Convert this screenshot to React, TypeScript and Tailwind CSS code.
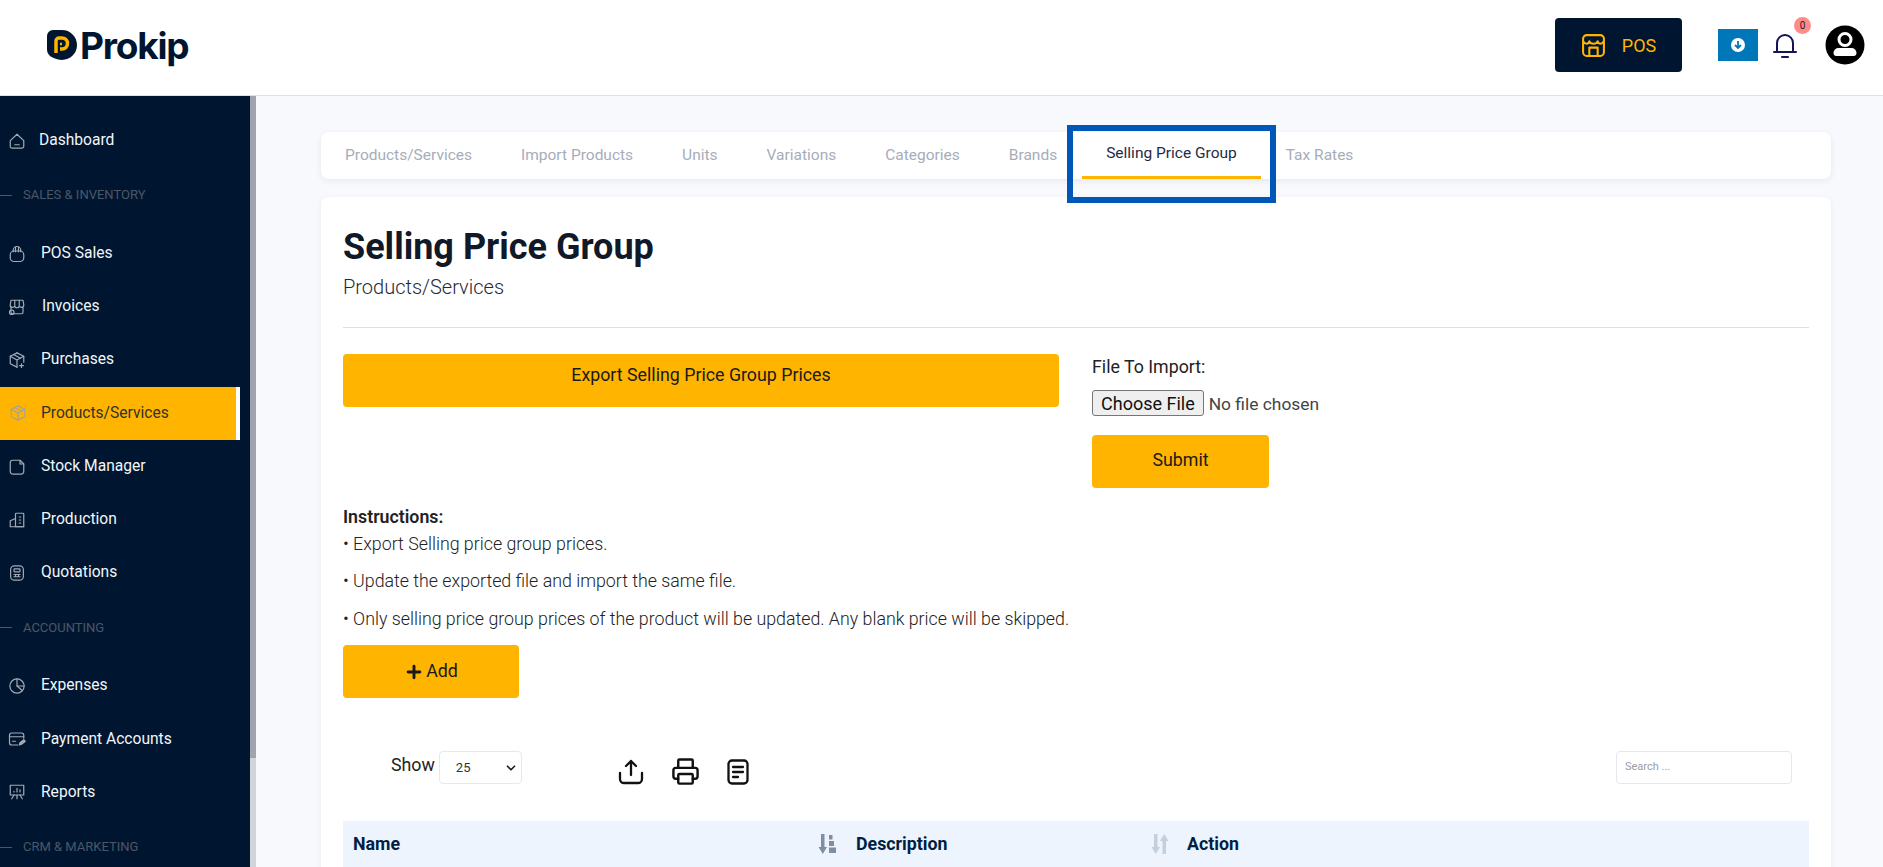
import { ChevronDown, Plus, Printer } from 'lucide-react';
import type { ReactNode } from 'react';

const S = ({ children }: { children: ReactNode }) => (
  <svg viewBox="0 0 24 24" fill="none" stroke="currentColor" strokeWidth="1.6" strokeLinecap="round" strokeLinejoin="round" className="w-[18px] h-[18px] shrink-0">
    {children}
  </svg>
);

const icons: Record<string, ReactNode> = {
  home: <S><path d="M3 11.5 12 3l9 8.5V19a2.5 2.5 0 0 1-2.5 2.5h-13A2.5 2.5 0 0 1 3 19z" /><path d="M9 17h6" /></S>,
  bag: <S><path d="M7 9V7a5 5 0 0 1 10 0v2" /><rect x="3" y="8" width="18" height="14" rx="5" /><path d="M10 3v6M14 3v6" /></S>,
  store: <S><path d="M4 3h16l1 6a3 3 0 0 1-6 1 3 3 0 0 1-6 0 3 3 0 0 1-6-1z" /><path d="M4 12v7a2 2 0 0 0 2 2h12a2 2 0 0 0 2-2v-7" /><path d="M9 3v6M15 3v6" /><circle cx="5" cy="19" r="3" /></S>,
  box: <S><path d="M12 2.5 21 7v8" /><path d="M12 2.5 3 7v10l9 4.5" /><path d="M3 7l9 5 9-5M12 12v9.5M7.5 4.7l9 5" /><path d="M18 17v5M15.5 19.5h5" /></S>,
  pack: <S><path d="M12 2.5 21 7v10l-9 4.5L3 17V7z" /><path d="M3 7l9 5 9-5M12 12v9.5M7.5 4.7l9 5" /></S>,
  file: <S><path d="M6 3h10l5 5v10a3.5 3.5 0 0 1-3.5 3.5h-11A3.5 3.5 0 0 1 3 18V6a3 3 0 0 1 3-3z" /><path d="M16 3v5h5" /></S>,
  build: <S><path d="M10 21V4a1 1 0 0 1 1-1h9a1 1 0 0 1 1 1v17z" /><path d="M3 21v-8l7-3M3 21h18" /><path d="M15 8h2M15 12h2M15 16h2" /></S>,
  calc: <S><rect x="3.5" y="2.5" width="17" height="19" rx="5" /><rect x="8" y="6.5" width="8" height="4" rx="1" /><path d="M8 14h8M8 17h8M10 14v3M14 14v3" /></S>,
  pie: <S><circle cx="12" cy="12" r="9.5" /><path d="M12 2.5V12l7 6" /><path d="M12 12h9.5" /></S>,
  card: <S><path d="M21 11V7a3 3 0 0 0-3-3H5a3 3 0 0 0-3 3v10a3 3 0 0 0 3 3h8" /><path d="M2 9h19" /><path d="M6 15h4" /><path d="m15 20 1-3 5-4 2 2-5 4z" fill="currentColor" /></S>,
  chart: <S><path d="M3 3h18v13H3z" /><path d="M8 12v-1M12 12V7M16 12V9" /><path d="M12 16v5M8 16l-3 5M16 16l3 5" /></S>,
};

type Entry = { label?: string; section?: string; icon?: string; gap?: string; active?: boolean };

const menu: Entry[] = [
  { label: 'Dashboard', icon: 'home', gap: 'gap-[13px]' },
  { section: 'SALES & INVENTORY' },
  { label: 'POS Sales', icon: 'bag', gap: 'gap-[15px]' },
  { label: 'Invoices', icon: 'store', gap: 'gap-[16px]' },
  { label: 'Purchases', icon: 'box', gap: 'gap-[15px]' },
  { label: 'Products/Services', icon: 'pack', active: true },
  { label: 'Stock Manager', icon: 'file', gap: 'gap-[15px]' },
  { label: 'Production', icon: 'build', gap: 'gap-[15px]' },
  { label: 'Quotations', icon: 'calc', gap: 'gap-[15px]' },
  { section: 'ACCOUNTING' },
  { label: 'Expenses', icon: 'pie', gap: 'gap-[15px]' },
  { label: 'Payment Accounts', icon: 'card', gap: 'gap-[15px]' },
  { label: 'Reports', icon: 'chart', gap: 'gap-[15px]' },
  { section: 'CRM & MARKETING' },
];

const tabs = ['Products/Services', 'Import Products', 'Units', 'Variations', 'Categories', 'Brands', 'Selling Price Group', 'Tax Rates'];

function Logo() {
  return (
    <div className="flex items-center">
      <svg viewBox="0 0 30 31" className="w-[30px] h-[31px]">
        <path d="M0 6a6 6 0 0 1 6-6h9a15 15 0 0 1 15 15 15 15 0 0 1-15 15c-3 0-5-1-7-1.500C3 27 0 24 0 19z" fill="#001630" />
        <path d="M9 23V11a3 3 0 0 1 3-3h3a5.500 5.500 0 0 1 0 11h-2" fill="none" stroke="#ffb400" strokeWidth="3.500" />
        <path d="M13 14h2" stroke="#ffb400" strokeWidth="2.500" />
      </svg>
      <span className="ml-[3px] text-[37px] leading-none font-bold tracking-[-1.2px] text-[#001630] font-['Inter',sans-serif]">Prokip</span>
    </div>
  );
}

function Sidebar() {
  return (
    <aside className="w-[256px] shrink-0 flex overflow-hidden">
      <nav className="w-[250px] bg-[#001630] pt-[18px] flex flex-col">
        {menu.map((m) =>
          m.section ? (
            <div key={m.section} className="h-[60px] shrink-0 flex items-center pb-[4px] text-[13px] text-[#4b5669]">
              <span className="w-3 h-px bg-[#4b5669] mr-[11px]" />
              {m.section}
            </div>
          ) : (
            <div
              key={m.label}
              className={
                m.active
                  ? 'h-[53.2px] shrink-0 w-[240px] flex items-center pl-[9px] gap-[14px] bg-[#ffb400] border-r-4 border-white text-[#33322c] text-[15.6px]'
                  : `h-[53.2px] shrink-0 flex items-center pl-[8px] ${m.gap} text-[#f2f5f9] text-[15.6px]`
              }
            >
              <span className={m.active ? 'text-[#a8a493]' : 'text-[#a3aab5]'}>{icons[m.icon as string]}</span>
              {m.label}
            </div>
          ),
        )}
      </nav>
      <div className="w-[6px] bg-[#d1d5db]">
        <div className="h-[662px] bg-[#a0a4af]" />
      </div>
    </aside>
  );
}

function SortDown() {
  return (
    <svg viewBox="0 0 18 20" className="w-[18px] h-[20px] text-[#7f8ea3]" fill="currentColor">
      <path d="M3 0h3.500v13H9l-4.200 7L.5 13H3z" />
      <path d="M11 1h3.500v4.500H11zM11 7h5v5h-5zM11 13.500h7V19h-7z" />
    </svg>
  );
}

function SortBoth() {
  return (
    <svg viewBox="0 0 18 20" className="w-[18px] h-[20px] text-[#c5d0de]" fill="currentColor">
      <path d="M3 0h3.500v13H9l-4.200 7L.5 13H3z" />
      <path d="M11.500 20V7H9l4.200-7L17.500 7H15v13z" />
    </svg>
  );
}

export default function App() {
  return (
    <div className="h-screen overflow-hidden flex flex-col font-['Roboto',sans-serif] bg-[#f8f9fd]">
      <header className="h-[96px] shrink-0 bg-white border-b border-[#dfe1e8] flex items-center pb-[5px] pl-[47px] pr-[18px]">
        <Logo />
        <div className="ml-auto flex items-center">
          <div className="w-[127px] h-[54px] rounded-[4px] bg-[#001630] flex items-center justify-center gap-[16px] text-[#ffb400] text-[18px] mr-[36px]">
            <svg viewBox="0 0 24 24" fill="none" stroke="currentColor" strokeWidth="2" strokeLinejoin="round" className="w-[25px] h-[25px]">
              <rect x="2" y="2" width="20" height="20" rx="3.500" />
              <path d="M2 8c2 3 5 3 6 0 1 3 7 3 8 0 1 3 4 3 6 0" />
              <path d="M8 22v-8h8v8" />
            </svg>
            POS
          </div>
          <div className="w-[40px] h-[32px] bg-[#0077b8] flex items-center justify-center mr-[15px]">
            <svg viewBox="0 0 14 14" className="w-[14px] h-[14px]">
              <circle cx="7" cy="7" r="7" fill="#fff" />
              <path d="M7 3v7M4 7l3 3 3-3" fill="none" stroke="#0077b8" strokeWidth="1.800" />
            </svg>
          </div>
          <div className="relative w-[24px] h-[26px] mr-[28px]">
            <svg viewBox="0 0 24 26" fill="none" stroke="#14145a" strokeWidth="2" className="w-[24px] h-[26px]">
              <path d="M1 20h22M4 20V11a8 8 0 0 1 16 0v9" strokeLinecap="round" />
              <path d="M9 25h6" strokeLinecap="round" />
            </svg>
            <span className="absolute -top-[15px] left-[21px] w-[17px] h-[17px] rounded-full bg-[#ff8a8a] text-[10px] leading-[17px] text-center text-[#222]">0</span>
          </div>
          <svg viewBox="0 0 40 40" className="w-[40px] h-[40px]">
            <circle cx="20" cy="20" r="19.500" fill="#000" />
            <circle cx="20" cy="14.500" r="6" fill="none" stroke="#fff" strokeWidth="3" />
            <path d="M8.500 28a5 5 0 0 1 5-5h13a5 5 0 0 1 5 5 3 3 0 0 1-3 3h-17a3 3 0 0 1-3-3z" fill="#fff" />
          </svg>
        </div>
      </header>

      <div className="flex-1 min-h-0 flex">
        <Sidebar />
        <main className="flex-1 min-w-0 pl-[65px] pr-[52px] pt-[36px] relative">
          <div className="h-[47px] bg-white rounded-[8px] shadow-[0_2px_6px_rgba(30,40,90,0.08)] flex gap-[1px] mb-[18px]">
            {tabs.map((t) =>
              t === 'Selling Price Group' ? (
                <div key={t} className="px-[24px] h-full flex items-center border-b-[3px] border-[#ffb400] text-[#1f2b44] text-[15.5px]">{t}</div>
              ) : (
                <div key={t} className="px-[24px] h-full flex items-center text-[#a6adba] text-[15.5px]">{t}</div>
              ),
            )}
          </div>
          {/* highlight drawn over the active tab */}
          <div className="absolute left-[811px] top-[29px] w-[209px] h-[78px] border-[6px] border-[#0057b8]" />

          <section className="bg-white rounded-[8px] shadow-[0_2px_6px_rgba(30,40,90,0.06)] px-[22px] pt-[29px] pb-10">
            <h1 className="text-[36px] leading-[42px] font-bold text-[#111827]">Selling Price Group</h1>
            <p className="mt-[5px] text-[20px] leading-[28px] font-light text-[#1f2937]">Products/Services</p>
            <hr className="mt-[26px] border-[#dcdfe3]" />

            <div className="mt-[26px] flex gap-[33px]">
              <button className="w-[716px] h-[53px] rounded-[4px] bg-[#ffb400] text-[17.8px] text-[#1a1a1a] pb-[10px]">Export Selling Price Group Prices</button>
              <div>
                <label className="block text-[17.8px] leading-[26px] font-normal text-[#222]">File To Import:</label>
                <input
                  type="file"
                  className="block mt-[10px] text-[17.4px] leading-[26px] text-[#444] w-[300px] file:mr-[5px] file:px-[8px] file:h-[26px] file:text-[18px] file:bg-[#efefef] file:border file:border-[#767676] file:rounded-[3px] file:text-[#111]"
                />
                <button className="mt-[18px] w-[177px] h-[53px] rounded-[4px] bg-[#ffb400] text-[17.8px] text-[#1a1a1a] pb-[2px]">Submit</button>
              </div>
            </div>

            <div className="mt-[17px] text-[17.8px] text-[#222]">
              <div className="font-semibold leading-[24px]">Instructions:</div>
              <p className="mt-[3px] leading-[24px] font-light">• Export Selling price group prices.</p>
              <p className="mt-[13px] leading-[24px] font-light">• Update the exported file and import the same file.</p>
              <p className="mt-[14px] leading-[24px] font-light">• Only selling price group prices of the product will be updated. Any blank price will be skipped.</p>
            </div>

            <button className="mt-[14px] w-[176px] h-[53px] rounded-[4px] bg-[#ffb400] text-[17.8px] text-[#1a1a1a] flex items-center justify-center gap-[2px]">
              <Plus size={20} strokeWidth={3.5} />
              Add
            </button>

            <div className="mt-[53px] flex items-start pl-[48px] pr-[17px]">
              <span className="text-[17.8px] leading-[28px] text-[#222] mr-[4px]">Show</span>
              <div className="relative w-[83px] h-[33px] border border-[#e6e8ee] rounded-[4px] text-[13px] text-[#333] flex items-center pl-[16px]">
                <select className="appearance-none w-full outline-none bg-transparent">
                  <option>25</option>
                </select>
                <ChevronDown size={14} strokeWidth={3} className="absolute right-[3px] top-[9px] text-[#222]" />
              </div>
              <div className="ml-[96px] mt-[6px] flex items-center gap-[28px] text-[#111]">
                <svg viewBox="0 0 26 26" fill="none" stroke="currentColor" strokeWidth="2.300" strokeLinecap="round" strokeLinejoin="round" className="w-[26px] h-[26px]">
                  <path d="M13 16V2M8 7l5-5 5 5" />
                  <path d="M2 14v6a4 4 0 0 0 4 4h14a4 4 0 0 0 4-4v-6" />
                </svg>
                <Printer size={29} strokeWidth={2} className="mx-[-1px]" />
                <svg viewBox="0 0 22 26" fill="none" stroke="currentColor" strokeWidth="2.300" strokeLinecap="round" className="w-[22px] h-[26px]">
                  <rect x="1.500" y="1.500" width="19" height="23" rx="3.500" />
                  <path d="M6 8h10M6 13h10M6 18h5" />
                </svg>
              </div>
              <input placeholder="Search ..." className="ml-auto w-[176px] h-[33px] border border-[#e6e8ee] rounded-[4px] pl-[8px] pb-[2px] text-[11px] outline-none placeholder:text-[#9a9da3]" />
            </div>

            <table className="mt-[35px] w-full table-fixed border-collapse">
              <thead>
                <tr className="h-[46px] bg-[#eef4fd] text-[#001f45] text-[17.8px] font-bold">
                  <th className="w-[503px] text-left pl-[10px] pr-[10px]">
                    <div className="flex items-center justify-between">Name<SortDown /></div>
                  </th>
                  <th className="w-[331px] text-left pl-[10px] pr-[8px]">
                    <div className="flex items-center justify-between">Description<SortBoth /></div>
                  </th>
                  <th className="text-left pl-[10px]">Action</th>
                </tr>
              </thead>
            </table>
          </section>
        </main>
      </div>
    </div>
  );
}
